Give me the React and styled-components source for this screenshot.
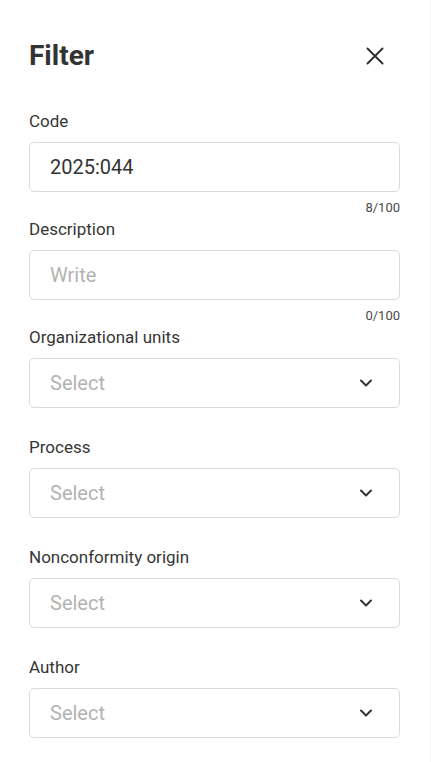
import styled, { createGlobalStyle } from "styled-components";

const GlobalStyle = createGlobalStyle`
  * {
    box-sizing: border-box;
  }
  body {
    margin: 0;
    background: #ffffff;
    font-family: Roboto, "Liberation Sans", sans-serif;
  }
`;

const fields = [
  { label: "Code", type: "input", value: "2025:044", placeholder: "Write", max: 100 },
  { label: "Description", type: "input", value: "", placeholder: "Write", max: 100 },
  { label: "Organizational units", type: "select" },
  { label: "Process", type: "select" },
  { label: "Nonconformity origin", type: "select" },
  { label: "Author", type: "select" },
];

const CloseIcon = () => (
  <svg width="24" height="24" viewBox="0 0 24 24" fill="none">
    <path d="M4.5 4.5l15 15M19.5 4.5l-15 15" stroke="#333" strokeWidth="2" strokeLinecap="round" />
  </svg>
);

const ChevronIcon = () => (
  <svg width="14" height="10" viewBox="0 0 14 10" fill="none">
    <path d="M2 2.5l5 5 5-5" stroke="#333" strokeWidth="2" strokeLinecap="round" strokeLinejoin="round" />
  </svg>
);

const Field = ({ field }) => {
  return (
    <FieldWrap>
      <Label>{field.label}</Label>
      {field.type === "input" ? (
        <>
          <Box>
            <Value $empty={!field.value}>{field.value || field.placeholder}</Value>
          </Box>
          <Counter>
            {field.value.length}/{field.max}
          </Counter>
        </>
      ) : (
        <>
          <Box>
            <Value $empty>Select</Value>
            <ChevronIcon />
          </Box>
          <Spacer />
        </>
      )}
    </FieldWrap>
  );
};

const App = () => {
  return (
    <Panel>
      <GlobalStyle />
      <Header>
        <Title>Filter</Title>
        <CloseButton aria-label="Close">
          <CloseIcon />
        </CloseButton>
      </Header>
      <Form>
        {fields.map((f) => (
          <Field key={f.label} field={f} />
        ))}
      </Form>
    </Panel>
  );
};

export default App;

const Panel = styled.div`
  width: 431px;
  min-height: 762px;
  padding: 38px 30px 0 29px;
  border-right: 1px solid #f3f3f3;
`;

const Header = styled.div`
  display: flex;
  align-items: center;
  justify-content: space-between;
  height: 36px;
`;

const Title = styled.h1`
  margin: 0;
  font-size: 28px;
  line-height: 34px;
  font-weight: 700;
  color: #333333;
`;

const CloseButton = styled.button`
  display: flex;
  align-items: center;
  justify-content: center;
  width: 24px;
  height: 24px;
  padding: 0;
  margin-right: 13px;
  border: none;
  background: none;
  cursor: pointer;
`;

const Form = styled.div`
  display: flex;
  flex-direction: column;
  margin-top: 37px;
`;

const FieldWrap = styled.div`
  display: flex;
  flex-direction: column;
`;

const Label = styled.label`
  font-size: 17px;
  line-height: 20px;
  color: #363636;
  margin-bottom: 11px;
`;

const Box = styled.div`
  display: flex;
  align-items: center;
  justify-content: space-between;
  height: 50px;
  padding: 0 26px 0 20px;
  border: 1px solid #dadada;
  border-radius: 5px;
  background: #ffffff;
`;

const Value = styled.span`
  font-size: 20px;
  color: ${({ $empty }) => ($empty ? "#b3b3b3" : "#333333")};
`;

const Counter = styled.div`
  align-self: flex-end;
  margin-top: 7.5px;
  margin-bottom: 3.5px;
  font-size: 13px;
  line-height: 16px;
  color: #4a4a4a;
`;

const Spacer = styled.div`
  height: 29px;
`;
